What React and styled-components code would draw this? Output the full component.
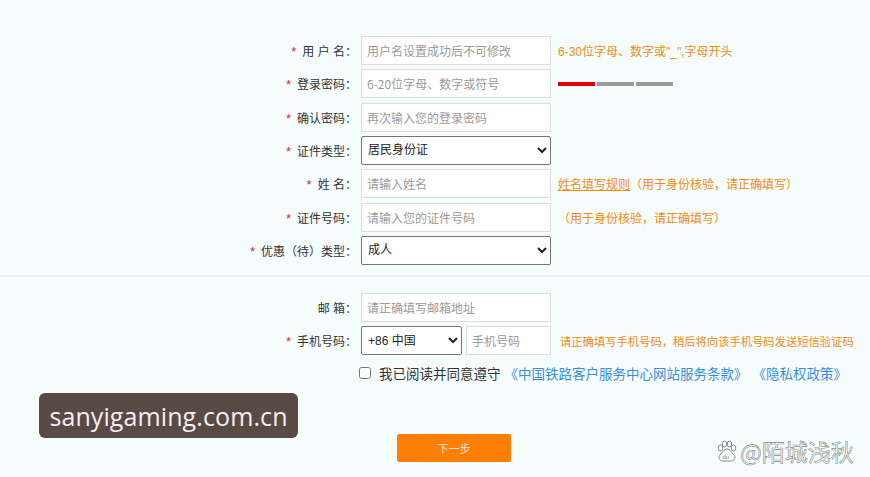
import React from "react";
import styled, { createGlobalStyle } from "styled-components";

const GlobalStyle = createGlobalStyle`
  html, body {
    margin: 0;
    padding: 0;
    background: #f6fdfd;
  }
  body {
    font-family: "Liberation Sans", "Noto Sans CJK SC", sans-serif;
    color: #333;
  }
`;

const Page = styled.div`
  position: relative;
  width: 870px;
  height: 477px;
  overflow: hidden;
  padding-top: 36px;
  box-sizing: border-box;
`;

const Form = styled.div`
  display: grid;
  grid-template-columns: 357px 190px auto;
  column-gap: 4px;
  row-gap: 4.33px;
  grid-auto-rows: 29px;
  align-items: center;
`;

const Divider = styled.div`
  height: 2px;
  background: #e9eded;
  margin: 10px 0 16px;
`;

const Label = styled.div`
  text-align: right;
  font-size: 12px;
  color: #333;
  white-space: pre;
`;

const Star = styled.span`
  color: #e8222b;
  font-size: 13px;
  margin-right: 6px;
`;

const Input = styled.input`
  box-sizing: border-box;
  width: 100%;
  min-width: 0;
  height: 29px;
  border: 1px solid #dcdcdc;
  background: #fff;
  padding: 0 5px;
  font-size: 12px;
  font-family: "Noto Sans CJK SC", sans-serif;
  color: #333;
  outline: none;

  &::placeholder {
    color: #9a9a9a;
  }
`;

const Select = styled.select`
  box-sizing: border-box;
  flex: none;
  width: ${(p) => p.$width || "100%"};
  height: 29px;
  border: 1px solid #767676;
  border-radius: 2px;
  background: #fff;
  padding: 0 2px;
  font-size: 12px;
  font-family: "Liberation Sans", "Noto Sans CJK SC", sans-serif;
  color: #222;
`;

const PhoneGroup = styled.div`
  display: flex;
  gap: 4px;
`;

const Hint = styled.div`
  padding-left: ${(p) => p.$pad || 3}px;
  font-size: ${(p) => p.$size || 12}px;
  color: #ef8c12;
  white-space: nowrap;
`;

const RuleLink = styled.a`
  color: #ef8c12;
  text-decoration: underline;
`;

const Strength = styled.div`
  display: flex;
  gap: 2px;
  padding-left: 3px;
`;

const Seg = styled.span`
  width: 37px;
  height: 4px;
  background: ${(p) => (p.$on ? "#e3000f" : "#9b9b9b")};
`;

const Agree = styled.div`
  display: flex;
  align-items: center;
  padding-left: 358px;
  margin-top: 8px;
  font-size: 13.5px;
  font-family: "Noto Sans CJK SC", sans-serif;
  color: #333;
`;

const Check = styled.input`
  width: 12px;
  height: 12px;
  margin: 0 8px 0 1px;
`;

const Terms = styled.a`
  color: #3b8ed6;
  text-decoration: none;
  margin-left: ${(p) => p.$gap || 0}px;
`;

const Actions = styled.div`
  display: flex;
  padding-left: 397px;
  margin-top: 51px;
`;

const NextButton = styled.button`
  width: 114px;
  height: 28px;
  border: none;
  border-radius: 2px;
  background: #fd7f05;
  color: #fbe7d2;
  font-size: 11px;
  font-family: "Noto Sans CJK SC", sans-serif;
`;

const SiteBadge = styled.div`
  position: absolute;
  left: 39px;
  top: 393px;
  width: 259px;
  height: 45px;
  display: flex;
  align-items: center;
  justify-content: center;
  border-radius: 6px;
  background: #584b43;
  color: #f6eef6;
  font-family: "Open Sans", sans-serif;
  font-size: 25px;
  letter-spacing: 0.1px;
`;

const AuthorMark = styled.div`
  position: absolute;
  left: 716px;
  top: 434px;
  display: flex;
  align-items: center;
  gap: 2px;
  font-family: "Noto Sans CJK SC", sans-serif;
  font-size: 23px;
  color: #fbfefe;
  -webkit-text-stroke: 0.6px #8a8a8a;
`;

const Paw = () => (
  <svg width="22" height="22" viewBox="0 0 22 22" fill="none" stroke="#8a8a8a" strokeWidth="1">
    <ellipse cx="4.5" cy="8" rx="2.3" ry="3" />
    <ellipse cx="8.5" cy="4" rx="2.2" ry="3" />
    <ellipse cx="13.5" cy="4" rx="2.2" ry="3" />
    <ellipse cx="17.5" cy="8" rx="2.3" ry="3" />
    <path d="M11 9c-3 0-5 4-7 6-2 2-1 6 3 6h8c4 0 5-4 3-6-2-2-4-6-7-6z" />
    <text x="6.5" y="19" fontSize="6" fill="#8a8a8a" stroke="none" fontFamily="Liberation Sans, sans-serif">du</text>
  </svg>
);

const Field = ({ star, label }) => (
  <Label>
    {star && <Star>*</Star>}
    {label}
  </Label>
);

export default function App() {
  return (
    <Page>
      <GlobalStyle />
      <Form>
        <Field star label="用 户 名：" />
        <Input placeholder="用户名设置成功后不可修改" />
        <Hint>6-30位字母、数字或"_",字母开头</Hint>

        <Field star label="登录密码：" />
        <Input placeholder="6-20位字母、数字或符号" />
        <Strength>
          <Seg $on />
          <Seg />
          <Seg />
        </Strength>

        <Field star label="确认密码：" />
        <Input placeholder="再次输入您的登录密码" />
        <span />

        <Field star label="证件类型：" />
        <Select defaultValue="id">
          <option value="id">居民身份证</option>
        </Select>
        <span />

        <Field star label="姓 名：" />
        <Input placeholder="请输入姓名" />
        <Hint>
          <RuleLink>姓名填写规则</RuleLink>（用于身份核验，请正确填写）
        </Hint>

        <Field star label="证件号码：" />
        <Input placeholder="请输入您的证件号码" />
        <Hint>（用于身份核验，请正确填写）</Hint>

        <Field star label="优惠（待）类型：" />
        <Select defaultValue="adult">
          <option value="adult">成人</option>
        </Select>
        <span />
      </Form>

      <Divider />

      <Form>
        <Field label="邮 箱：" />
        <Input placeholder="请正确填写邮箱地址" />
        <span />

        <Field star label="手机号码：" />
        <PhoneGroup>
          <Select $width="101px" defaultValue="86">
            <option value="86">+86 中国</option>
          </Select>
          <Input placeholder="手机号码" />
        </PhoneGroup>
        <Hint $pad={5} $size={11.3}>请正确填写手机号码，稍后将向该手机号码发送短信验证码</Hint>
      </Form>

      <Agree>
        <Check type="checkbox" />
        我已阅读并同意遵守
        <Terms $gap={4}>《中国铁路客户服务中心网站服务条款》</Terms>
        <Terms $gap={5}>《隐私权政策》</Terms>
      </Agree>

      <Actions>
        <NextButton>下一步</NextButton>
      </Actions>

      <SiteBadge>sanyigaming.com.cn</SiteBadge>
      <AuthorMark>
        <Paw />
        @陌城浅秋
      </AuthorMark>
    </Page>
  );
}
